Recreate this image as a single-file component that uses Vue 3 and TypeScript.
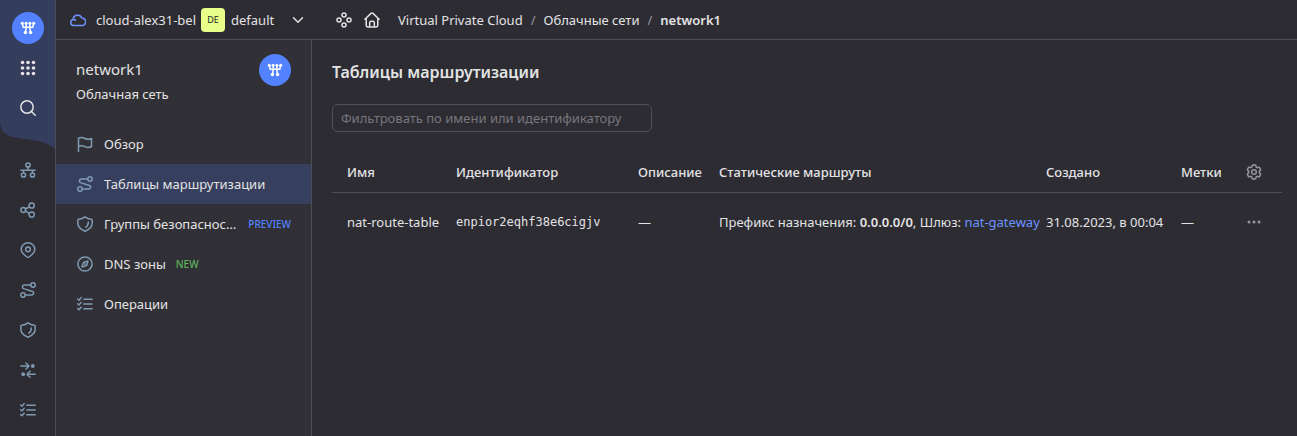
<script setup lang="ts">
import { ref } from 'vue'

type IconName = 'org' | 'share' | 'pin' | 'route' | 'shield' | 'arrows' | 'list' | 'flag' | 'compass'

interface NavItem {
  icon: IconName
  label: string
  tag?: string
  tone?: string
  active?: boolean
}

const icons: Record<IconName, string> = {
  org: '<circle cx="8" cy="3" r="2.1"/><circle cx="3.5" cy="13" r="2.1"/><circle cx="12.5" cy="13" r="2.1"/><path d="M8 5.1v3.2M.8 8.3h14.4M3.5 8.3v2.9M12.5 8.3v2.9"/>',
  share: '<circle cx="3.3" cy="8" r="2.4"/><circle cx="11.7" cy="3.5" r="2.6"/><circle cx="11.7" cy="12.6" r="2.6"/><path d="M5.5 7l3.8-2.2M5.5 9.1l3.8 2.2"/>',
  pin: '<path d="M14.8 7.4c0 2.7-2.4 4.900-5 7.100-1.200.9-2.400.9-3.600 0C3.600 12.300 1.200 10.100 1.200 7.400a6.800 6.600 0 0 1 13.600 0z"/><circle cx="8" cy="7.400" r="2.300"/>',
  route: '<circle cx="13" cy="3" r="2.200"/><circle cx="3" cy="13" r="2.200"/><path d="M10.800 3H4.200a1.900 1.900 0 0 0-.7 3.600l9 2.900a1.750 1.750 0 0 1-.5 3.400H5.200"/>',
  shield: '<path d="M8 .9c1.700 1.400 3.900 2.200 6.200 2.400.600.100 1 .5 1 1.100v2.400c0 3.900-2.600 6.800-7.200 8.400C3.400 13.600.8 10.700.8 6.800V4.400c0-.6.4-1 1-1.100C4.100 3.100 6.300 2.300 8 .9z"/><path d="M11.300 6c.1 2.300-.7 3.900-2.500 5.100"/>',
  arrows: '<path d="M.8 4h8M6 1l3 3-3 3M15.200 12.200h-8M10 9.200l-3 3 3 3"/><circle class="solid" cx="12.800" cy="4" r="1.900"/><circle class="solid" cx="3.200" cy="12.200" r="1.900"/>',
  list: '<path d="M6.800 3.200h8.400M6.800 8h8.400M6.800 12.800h8.400M.7 3l1.300 1.200 2.100-2.600M.7 7.800L2 9l2.100-2.600M.7 12.600L2 13.800l2.100-2.600"/>',
  flag: '<path d="M1.500 15.300V2.200c2.200-1.200 4.300-.9 6.500.3s4.200 1.200 6.500 0v8c-2.300 1.300-4.300 1.200-6.500.1s-4.300-1.400-6.500-.2"/>',
  compass: '<circle cx="8" cy="8" r="7.100"/><path d="M11 5l-1.200 4.100-.7.700L5 11l1.200-4.100.7-.7z"/><circle class="solid" cx="8" cy="8" r=".9"/>',
}

const rail: { icon: IconName; label: string }[] = [
  { icon: 'org', label: 'Облачные сети' },
  { icon: 'share', label: 'Подсети' },
  { icon: 'pin', label: 'IP-адреса' },
  { icon: 'route', label: 'Таблицы маршрутизации' },
  { icon: 'shield', label: 'Группы безопасности' },
  { icon: 'arrows', label: 'Шлюзы' },
  { icon: 'list', label: 'Операции' },
]

const nav: NavItem[] = [
  { icon: 'flag', label: 'Обзор' },
  { icon: 'route', label: 'Таблицы маршрутизации', active: true },
  { icon: 'shield', label: 'Группы безопасности', tag: 'PREVIEW', tone: 'blue' },
  { icon: 'compass', label: 'DNS зоны', tag: 'NEW', tone: 'green' },
  { icon: 'list', label: 'Операции' },
]

const rows = [
  {
    name: 'nat-route-table',
    id: 'enpior2eqhf38e6cigjv',
    description: '—',
    prefix: '0.0.0.0/0',
    gateway: 'nat-gateway',
    created: '31.08.2023, в 00:04',
    labels: '—',
  },
]

const vpcMark =
  '<path d="M2.500 3.500L3.200 7.300H12.800L13.500 3.500M6.200 3.500V7.300L5.500 12.300M9.800 3.500V7.300l.7 5"/><g class="solid"><circle cx="2.300" cy="3.300" r="1.500"/><circle cx="6.100" cy="3.300" r="1.500"/><circle cx="9.900" cy="3.300" r="1.500"/><circle cx="13.700" cy="3.300" r="1.500"/><circle cx="5.400" cy="12.500" r="1.700"/><circle cx="10.600" cy="12.500" r="1.700"/></g>'

const filter = ref('')
</script>

<template>
  <div class="console">
    <aside class="rail">
      <div class="rail-top">
        <svg class="rail-wave" viewBox="0 0 55 150" preserveAspectRatio="none" aria-hidden="true">
          <path d="M0 0H55V149C47 142 38 141 28 139.500L15 137.500C5 135.500 0 131 0 121Z" />
        </svg>
        <a class="round" href="#" aria-label="Virtual Private Cloud"><svg class="ico mark" viewBox="0 0 16 16" v-html="vpcMark"></svg></a>
        <button class="rail-btn" type="button" aria-label="Все сервисы">
          <svg class="ico" viewBox="0 0 16 16">
            <g class="solid">
              <template v-for="y in 3" :key="y">
                <circle v-for="x in 3" :key="x" :cx="x * 5.5 - 3" :cy="y * 5.5 - 3" r="1.800" />
              </template>
            </g>
          </svg>
        </button>
        <button class="rail-btn" type="button" aria-label="Поиск">
          <svg class="ico" viewBox="0 0 16 16"><circle cx="7" cy="7" r="6.200" /><path d="M11.500 11.500l3.700 3.700" /></svg>
        </button>
      </div>
      <nav class="rail-nav" aria-label="Разделы сервиса">
        <a v-for="item in rail" :key="item.icon" href="#" class="rail-btn" :aria-label="item.label">
          <svg class="ico" viewBox="0 0 16 16" v-html="icons[item.icon]"></svg>
        </a>
      </nav>
    </aside>

    <div class="body">
      <header class="topbar">
        <button class="folder" type="button">
          <svg class="ico cloud" viewBox="0 0 16 16"><path d="M3.800 13.600a3.100 3.100 0 0 1-.7-6.100A4.500 4.500 0 0 1 11.800 6.100a3.750 3.750 0 0 1 .3 7.500zM3.100 7.500c.900-.2 1.900.1 2.500.800" /></svg>
          <span class="cloud-name">cloud-alex31-bel</span>
          <span class="folder-badge">DE</span>
          <span class="folder-name">default</span>
          <svg class="ico chevron" viewBox="0 0 16 16"><path d="M3.500 5.800L8 10.200l4.500-4.400" /></svg>
        </button>
        <nav class="crumbs" aria-label="Навигация">
          <a class="crumb-icon" href="#" aria-label="Ресурсы">
            <svg class="ico" viewBox="0 0 16 16"><circle cx="8" cy="3" r="2" /><circle cx="3" cy="8" r="2" /><circle cx="13" cy="8" r="2" /><circle cx="8" cy="13" r="2" /></svg>
          </a>
          <a class="crumb-icon" href="#" aria-label="Главная">
            <svg class="ico" viewBox="0 0 16 16"><path d="M.9 7.200L7 1.400q1-.9 2 0l6.100 5.800M2.200 6.200v6.800q0 2 2 2h7.600q2 0 2-2V6.200M5.700 15v-4.300q0-1.500 1.500-1.500h1.600q1.500 0 1.500 1.500V15" /></svg>
          </a>
          <a href="#">Virtual Private Cloud</a>
          <span class="slash">/</span>
          <a href="#">Облачные сети</a>
          <span class="slash">/</span>
          <strong>network1</strong>
        </nav>
      </header>

      <div class="content">
        <aside class="side">
          <div class="side-head">
            <div>
              <div class="side-title">network1</div>
              <div class="side-sub">Облачная сеть</div>
            </div>
            <span class="round"><svg class="ico mark" viewBox="0 0 16 16" v-html="vpcMark"></svg></span>
          </div>
          <nav aria-label="Облачная сеть">
            <a v-for="item in nav" :key="item.label" href="#" class="side-link" :class="{ active: item.active }">
              <svg class="ico" viewBox="0 0 16 16" v-html="icons[item.icon]"></svg>
              <span class="side-label">{{ item.label }}</span>
              <span v-if="item.tag" class="tag" :class="item.tone">{{ item.tag }}</span>
            </a>
          </nav>
        </aside>

        <main class="main">
          <h1>Таблицы маршрутизации</h1>
          <input v-model="filter" class="filter" type="text" aria-label="Фильтр" placeholder="Фильтровать по имени или идентификатору" />
          <table>
            <colgroup>
              <col class="c-name" /><col class="c-id" /><col class="c-desc" /><col /><col class="c-date" /><col class="c-labels" /><col class="c-act" />
            </colgroup>
            <thead>
              <tr>
                <th>Имя</th>
                <th>Идентификатор</th>
                <th>Описание</th>
                <th>Статические маршруты</th>
                <th>Создано</th>
                <th>Метки</th>
                <th>
                  <button class="act" type="button" aria-label="Настройки таблицы">
                    <svg class="ico" viewBox="0 0 16 16">
                      <path d="M7 1h2q.7 0 .9.800l.3 1.300 1 .6 1.400-.4q.7-.2 1 .4l.9 1.600q.3.600-.2 1.100L13.300 7.400v1.200l1 1q.5.500.2 1.100l-.9 1.600q-.3.600-1 .4l-1.400-.4-1 .6-.3 1.300q-.2.800-.9.800H7q-.7 0-.9-.8l-.3-1.300-1-.6-1.400.4q-.7.2-1-.4l-.9-1.600q-.3-.6.2-1.100l1-1V7.400l-1-1q-.5-.5-.2-1.100l.9-1.600q.3-.6 1-.4l1.400.4 1-.6.3-1.300Q6.300 1 7 1z" />
                      <circle cx="8" cy="8" r="2.300" />
                    </svg>
                  </button>
                </th>
              </tr>
            </thead>
            <tbody>
              <tr v-for="row in rows" :key="row.id">
                <td>{{ row.name }}</td>
                <td class="mono">{{ row.id }}</td>
                <td>{{ row.description }}</td>
                <td>Префикс назначения: <b>{{ row.prefix }}</b>, Шлюз: <a href="#">{{ row.gateway }}</a></td>
                <td>{{ row.created }}</td>
                <td>{{ row.labels }}</td>
                <td>
                  <button class="act" type="button" aria-label="Действия">
                    <svg class="ico" viewBox="0 0 16 16"><g class="solid"><circle cx="3" cy="8" r="1.500" /><circle cx="8" cy="8" r="1.500" /><circle cx="13" cy="8" r="1.500" /></g></svg>
                  </button>
                </td>
              </tr>
            </tbody>
          </table>
        </main>
      </div>
    </div>
  </div>
</template>

<style>
body {
  margin: 0;
  background: #2d2c33;
}
</style>

<style scoped>
.console {
  display: flex;
  min-height: 100vh;
  font: 13px/20px "Noto Sans", "Open Sans", sans-serif;
  color: #e3e3e4;
  background: #2d2c33;
}
.console * {
  box-sizing: border-box;
}
a {
  color: inherit;
  text-decoration: none;
}
button {
  padding: 0;
  border: 0;
  background: none;
  color: inherit;
  font: inherit;
  cursor: pointer;
}
.ico {
  display: block;
  flex: none;
  width: 16px;
  height: 16px;
  fill: none;
  stroke: currentColor;
  stroke-width: 1.5;
  stroke-linecap: round;
  stroke-linejoin: round;
}
.ico :deep(.solid) {
  fill: currentColor;
  stroke: none;
}
.rail {
  flex: none;
  width: 56px;
  border-right: 1px solid #4e4d54;
}
.rail-top {
  position: relative;
  display: flex;
  flex-direction: column;
  align-items: center;
  height: 150px;
  padding-top: 12px;
}
.rail-wave {
  position: absolute;
  inset: 0;
  width: 100%;
  height: 100%;
  fill: #343d5c;
}
.rail-top .round,
.rail-top .rail-btn {
  position: relative;
}
.round {
  display: flex;
  flex: none;
  align-items: center;
  justify-content: center;
  width: 32px;
  height: 32px;
  border-radius: 50%;
  background: #5282ff;
  color: #fff;
}
.mark {
  stroke-width: 1.5;
}
.rail-btn {
  display: flex;
  align-items: center;
  justify-content: center;
  width: 100%;
  height: 40px;
}
.round + .rail-btn {
  margin-top: 4px;
}
.rail-nav {
  color: #7f99b2;
}
.body {
  display: flex;
  flex: 1;
  flex-direction: column;
  min-width: 0;
}
.topbar {
  display: flex;
  align-items: center;
  height: 40px;
  padding-left: 14px;
  border-bottom: 1px solid #4e4d54;
  white-space: nowrap;
}
.folder {
  display: flex;
  align-items: center;
  width: 236px;
}
.cloud {
  color: #6c93ff;
}
.cloud-name {
  margin: 0 5px 0 10px;
}
.folder-badge {
  width: 24px;
  height: 24px;
  border-radius: 4px;
  background: #e9ff8a;
  color: #222;
  font-size: 9px;
  line-height: 24px;
  text-align: center;
}
.folder-name {
  margin-left: 6px;
}
.chevron {
  margin-left: auto;
}
.crumbs {
  display: flex;
  align-items: center;
  margin-left: 30px;
}
.crumb-icon {
  margin-right: 12px;
}
.crumb-icon + .crumb-icon {
  margin-right: 18px;
}
.slash {
  margin: 0 8px;
  color: #96959a;
}
strong,
b {
  font-weight: 600;
}
th {
  font-weight: 500;
}
.content {
  display: flex;
  flex: 1;
}
.side {
  flex: none;
  width: 256px;
  border-right: 1px solid #4e4d54;
  background: #313036;
}
.side-head {
  display: flex;
  justify-content: space-between;
  padding: 14px 20px 20px;
}
.side-title {
  height: 30px;
  font-size: 15px;
  line-height: 30px;
}
.side-link {
  display: flex;
  align-items: center;
  height: 40px;
  padding: 0 20px 0 21px;
  color: #7f99b2;
}
.side-link.active {
  background: #373f5e;
}
.side-label {
  overflow: hidden;
  margin-left: 11px;
  color: #e3e3e4;
  text-overflow: ellipsis;
  white-space: nowrap;
}
.tag {
  margin-left: 10px;
  font-size: 10px;
  font-weight: 500;
}
.blue {
  color: #5282ff;
}
.green {
  color: #5bb557;
}
.main {
  flex: 1;
  min-width: 0;
  padding: 20px 15px 20px 20px;
}
h1 {
  margin: 0 0 20px;
  font-size: 16px;
  font-weight: 600;
  line-height: 24px;
}
.filter {
  display: block;
  width: 320px;
  max-width: 100%;
  height: 28px;
  padding: 0 8px;
  border: 1px solid #515057;
  border-radius: 6px;
  background: none;
  color: inherit;
  font: inherit;
}
.filter::placeholder {
  color: #77767b;
  opacity: 1;
}
table {
  width: 100%;
  margin-top: 20px;
  border-collapse: collapse;
  table-layout: fixed;
}
.c-name {
  width: 114px;
}
.c-id {
  width: 182px;
}
.c-desc {
  width: 81px;
}
.c-date {
  width: 135px;
}
.c-labels {
  width: 65px;
}
.c-act {
  width: 46px;
}
th,
td {
  height: 40px;
  padding: 0 0 0 10px;
  text-align: left;
  white-space: nowrap;
}
th {
  border-bottom: 1px solid #4e4d54;
}
td {
  height: 60px;
}
th:first-child,
td:first-child {
  padding-left: 15px;
}
td a {
  color: #6c93ff;
}
.mono {
  font-family: "DejaVu Sans Mono", monospace;
  font-size: 12px;
}
.act {
  display: block;
  color: #96959a;
}
</style>
